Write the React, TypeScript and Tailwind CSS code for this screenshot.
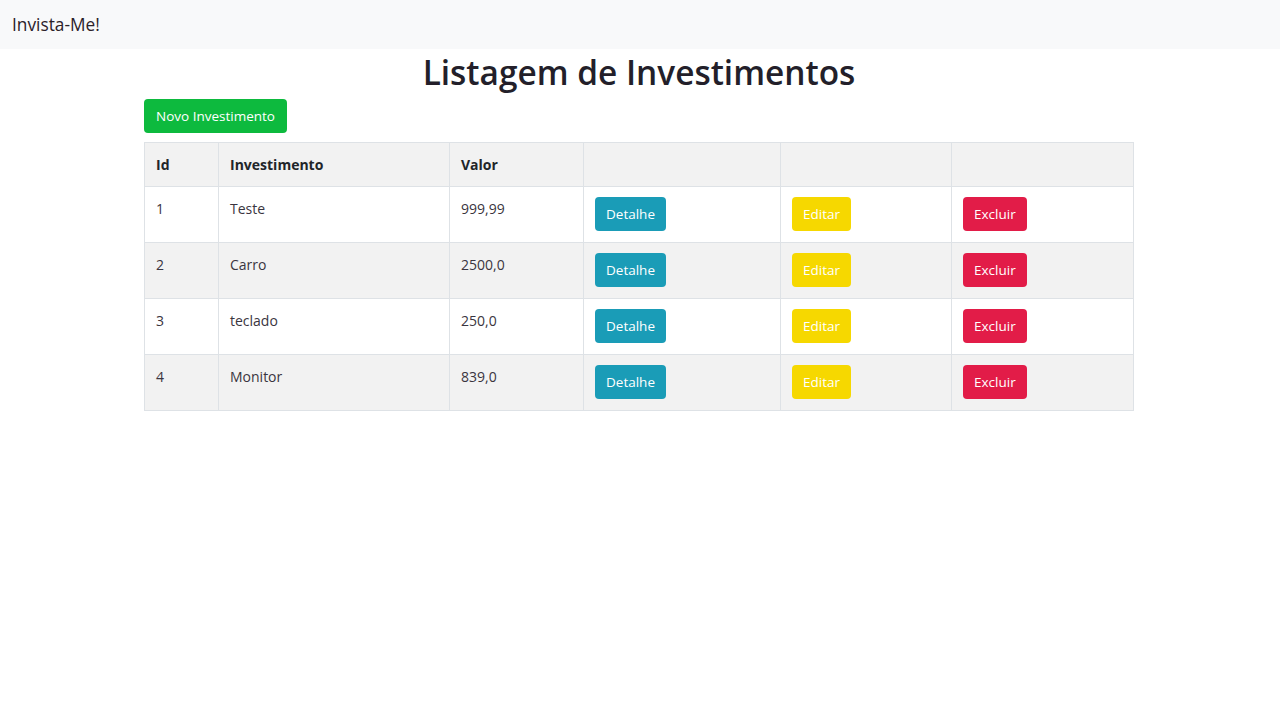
const investimentos = [
  { id: 1, nome: "Teste", valor: "999,99" },
  { id: 2, nome: "Carro", valor: "2500,0" },
  { id: 3, nome: "teclado", valor: "250,0" },
  { id: 4, nome: "Monitor", valor: "839,0" },
];

const cell = "border border-[#dee2e6] pl-[11px] pr-3 align-top";

const App = () => {
  return (
    <div className="min-h-[702px] bg-white font-['Open_Sans',sans-serif] text-[#212529]">
      <nav className="h-[49px] bg-[#f8f9fa] flex items-center px-3">
        <span className="text-[17.3px] text-[#2b2129]">Invista-Me!</span>
      </nav>
      <div className="w-[990px] ml-[144px]">
        <h1 className="text-center text-[33.4px] font-semibold leading-[46px] text-[#231f2a]">
          Listagem de Investimentos
        </h1>
        <button className="mt-[4px] h-[34px] px-3 rounded-[4px] bg-[#0dba3e] text-white text-[13.5px]">
          Novo Investimento
        </button>
        <table className="mt-[9px] w-full border-collapse text-[14px]">
          <thead>
            <tr className="bg-[#f2f2f2] h-[44px] text-left">
              <th className={`${cell} !align-middle w-[74px] font-bold`}>Id</th>
              <th className={`${cell} !align-middle w-[231px] font-bold`}>Investimento</th>
              <th className={`${cell} !align-middle w-[134px] font-bold`}>Valor</th>
              <th className={`${cell} w-[197px]`}></th>
              <th className={`${cell} w-[171px]`}></th>
              <th className={cell}></th>
            </tr>
          </thead>
          <tbody>
            {investimentos.map((item) => (
              <tr key={item.id} className="h-[56px] even:bg-[#f2f2f2] text-[#3a3540]">
                <td className={`${cell} pt-[11px]`}>{item.id}</td>
                <td className={`${cell} pt-[11px]`}>{item.nome}</td>
                <td className={`${cell} pt-[11px]`}>{item.valor}</td>
                <td className={`${cell} pt-[10px]`}>
                  <button className="h-[34px] px-[11px] rounded-[4px] bg-[#1a9cb7] text-white text-[13.5px]">Detalhe</button>
                </td>
                <td className={`${cell} pt-[10px]`}>
                  <button className="h-[34px] px-[11px] rounded-[4px] bg-[#f6d800] text-white text-[13.5px]">Editar</button>
                </td>
                <td className={`${cell} pt-[10px]`}>
                  <button className="h-[34px] px-[11px] rounded-[4px] bg-[#e21c48] text-white text-[13.5px]">Excluir</button>
                </td>
              </tr>
            ))}
          </tbody>
        </table>
      </div>
    </div>
  );
};

export default App;
